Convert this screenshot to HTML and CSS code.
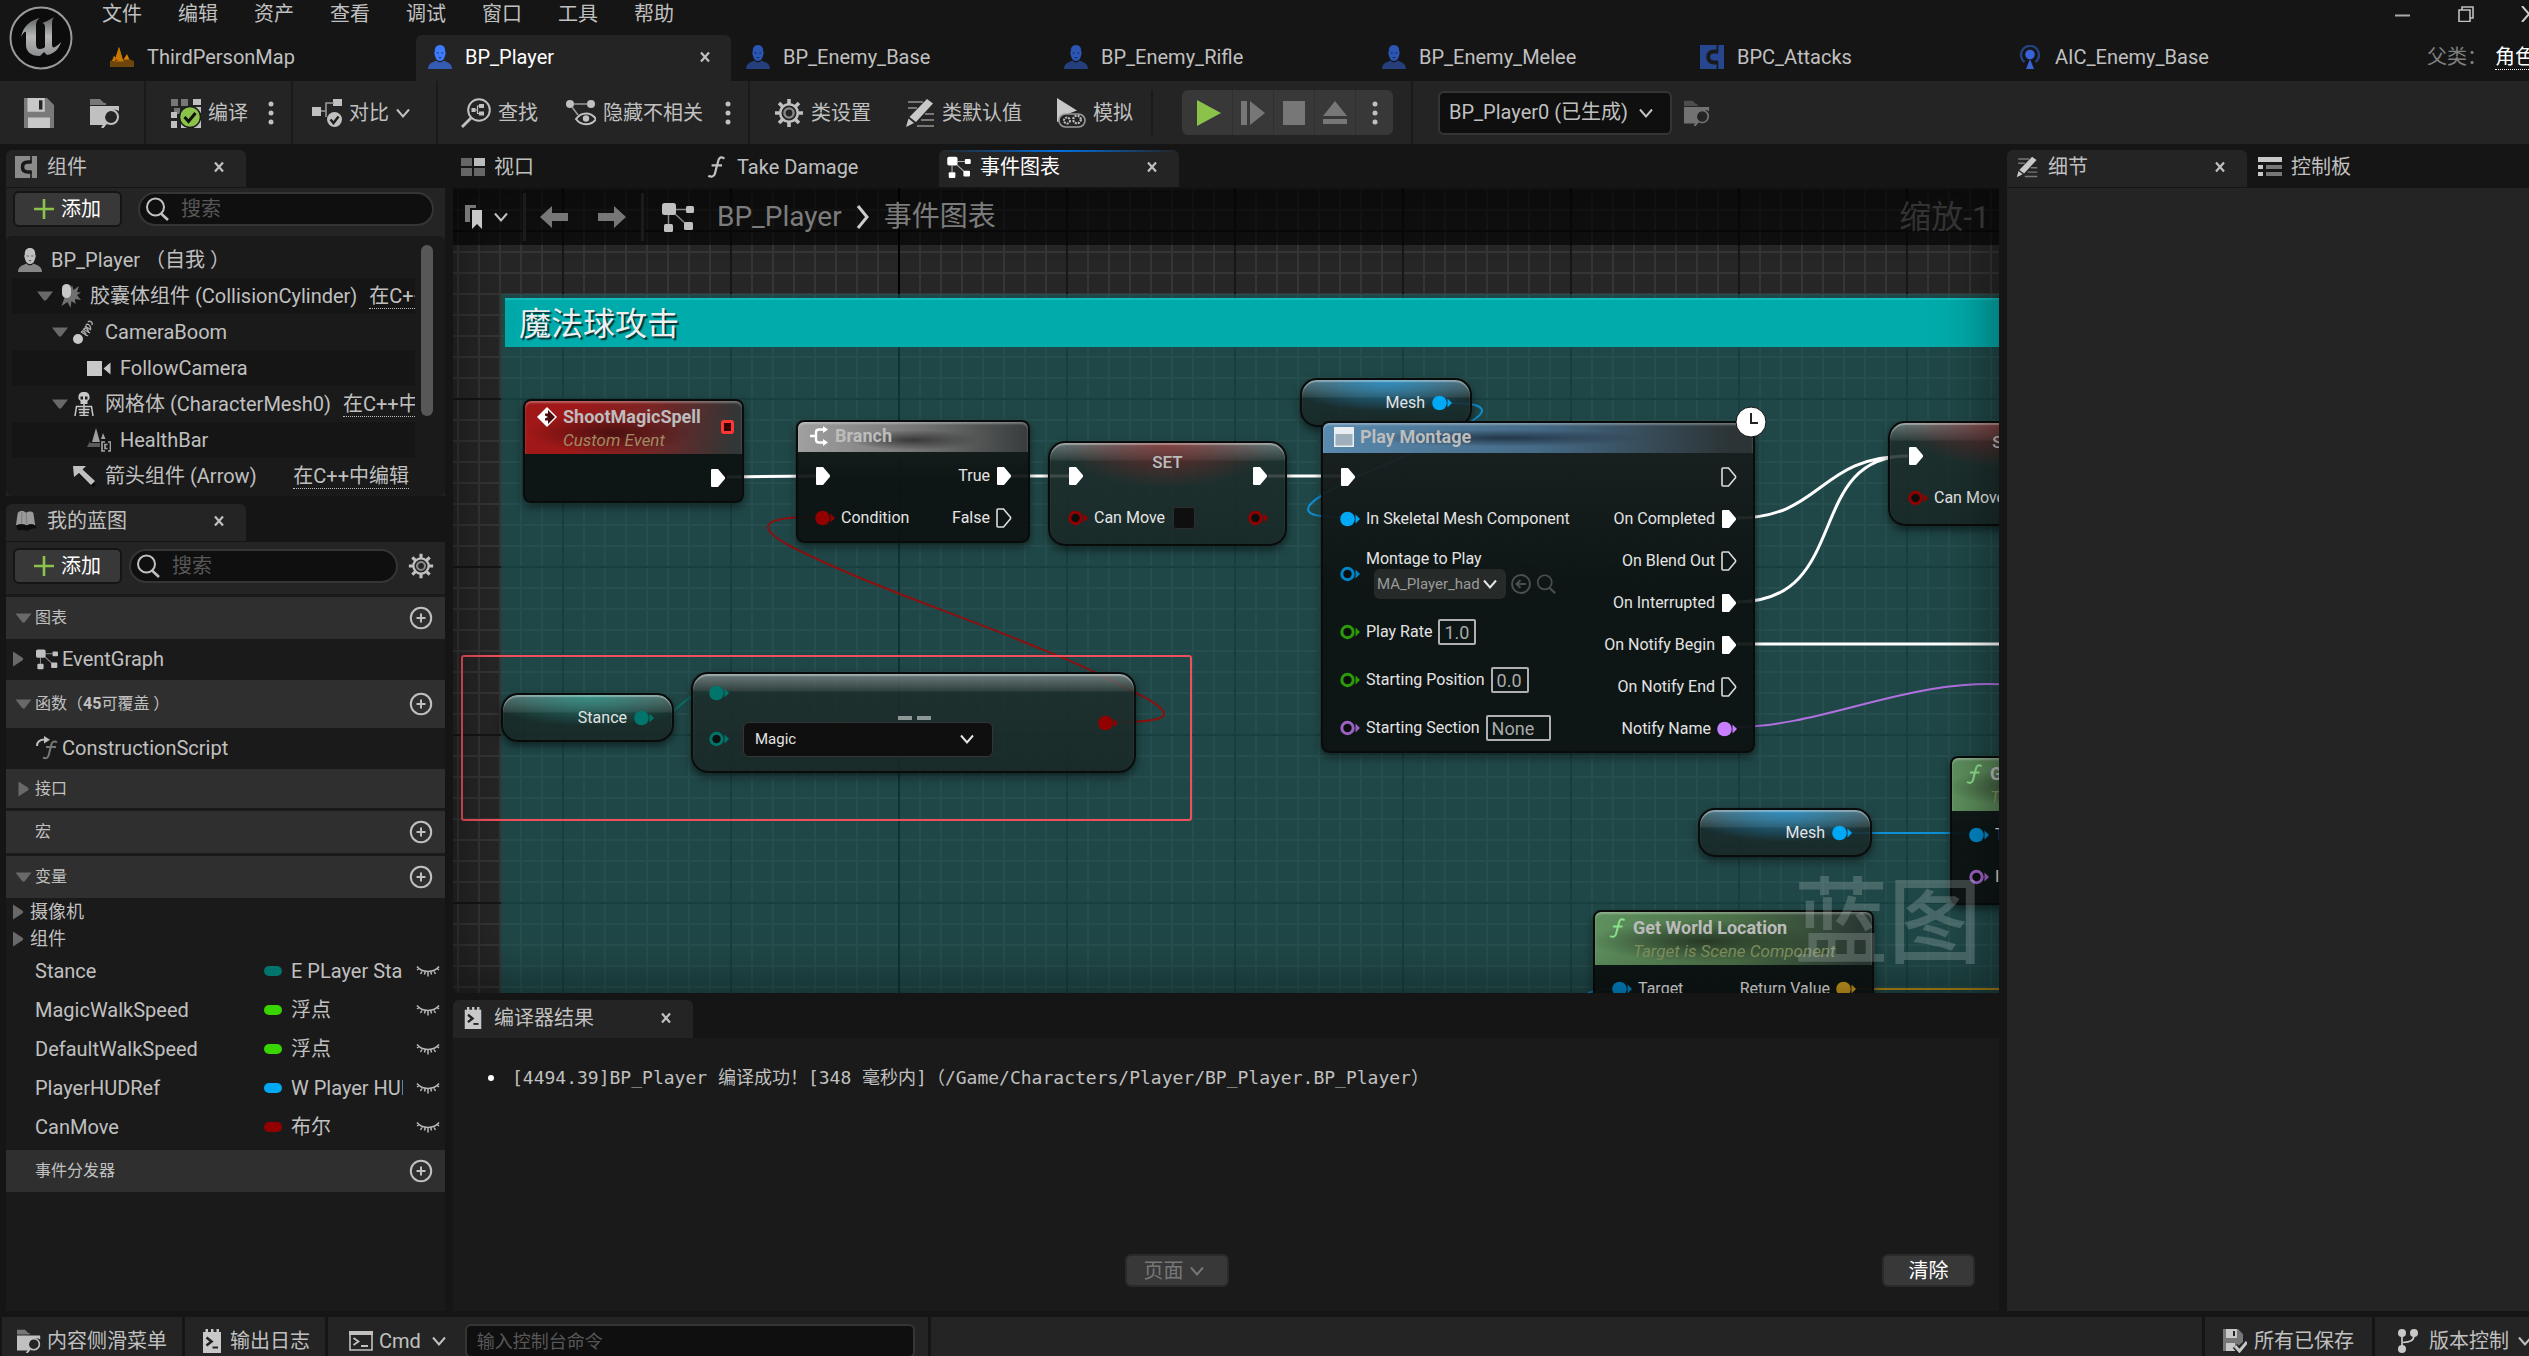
FILE: index.html
```html
<!DOCTYPE html>
<html lang="zh-CN">
<head>
    <meta charset="UTF-8">
    <meta name="viewport" content="width=device-width, initial-scale=1.0">
    <title>BP_Player</title>
    <link rel="stylesheet" href="styles.css">
</head>
<body>
<!-- icon sprite -->
<svg class="sprite" aria-hidden="true">
    <symbol id="i-close" viewBox="0 0 12 12"><path d="M2 1.500l8 9M10 1.500l-8 9" stroke="currentColor" stroke-width="2.200" fill="none"/></symbol>
    <symbol id="i-chevron" viewBox="0 0 14 14"><path d="M1 3.500l6 7 6-7" stroke="currentColor" stroke-width="2" fill="none"/></symbol>
    <symbol id="i-dots" viewBox="0 0 6 24"><circle cx="3" cy="3" r="2.500" fill="currentColor"/><circle cx="3" cy="12" r="2.500" fill="currentColor"/><circle cx="3" cy="21" r="2.500" fill="currentColor"/></symbol>
    <symbol id="i-down" viewBox="0 0 16 12"><path d="M0 1.500h16L9 10.500H7z" fill="#696969"/></symbol>
    <symbol id="i-right" viewBox="0 0 12 16"><path d="M1 0.500v15L11 9V7z" fill="#696969"/></symbol>
    <symbol id="i-plus" viewBox="0 0 20 20"><path d="M10 0v20M0 10h20" stroke="#8bc24a" stroke-width="2.600"/></symbol>
    <symbol id="i-add" viewBox="0 0 24 24"><circle cx="12" cy="12" r="10.200" stroke="currentColor" stroke-width="2" fill="none"/><path d="M12 7.500v9M7.500 12h9" stroke="currentColor" stroke-width="2"/></symbol>
    <symbol id="i-search" viewBox="0 0 24 24"><circle cx="10.500" cy="10" r="8.500" stroke="currentColor" stroke-width="2" fill="none"/><path d="M16 16.500l7 6.500" stroke="currentColor" stroke-width="2.600"/></symbol>
    <symbol id="i-person" viewBox="0 0 24 24"><path d="M12 0c4 0 5.400 3 5.200 6.500l.6 1.500-.9 3.200C16 14.500 14 16 12 16s-4-1.500-4.900-4.800L6.200 8l.6-1.500C6.600 3 8 0 12 0z" fill="currentColor"/><path d="M8.500 8h2.300M13.200 8h2.300M10.800 12.600h2.400" stroke="#000" stroke-opacity=".5" stroke-width="1.200"/><path d="M8.500 15.500c1 1.300 2.200 1.800 3.500 1.800s2.500-.5 3.500-1.800C20 17.500 24 18.500 24 24H0c0-5.500 4-6.500 8.500-8.500z" fill="currentColor" opacity=".65"/></symbol>
    <symbol id="i-level" viewBox="0 0 24 20"><path d="M9 0l4 14H4.500zM17 7l3.500 8H12z" fill="#d98200"/><path d="M0 14l4-1.500h16l4 1.500v6H0z" fill="#6e450c"/><path d="M4 8.500L2 14h6zM9 0l4.500 14.500H4.500z" fill="#c87800"/></symbol>
    <symbol id="i-comp" viewBox="0 0 22 22"><path d="M0 0h22v22H0z" fill="currentColor"/><path d="M16.500 6H13c-3.500 0-5.500 2-5.500 5s2 5 5.500 5h3.500" fill="none" stroke="#191919" stroke-width="3.600"/><path d="M16 0v7M16 15v7" stroke="#191919" stroke-width="1.600"/></symbol>
    <symbol id="i-ai" viewBox="0 0 20 24"><path d="M4.500 17a9 9 0 1 1 11 0" stroke="#24427f" stroke-width="2.400" fill="none"/><circle cx="10" cy="9.500" r="4.800" fill="#3864d8"/><path d="M10 14l4 10H6z" fill="#3864d8"/></symbol>
    <symbol id="i-save" viewBox="0 0 26 26"><path d="M0 0h20l6 6v20H0z" fill="#7a7a7a"/><path d="M3 0h15v12H3zM3.500 17h19v9h-19z" fill="#c8c8c8"/><path d="M13 2h3v8h-3z" fill="#242424"/></symbol>
    <symbol id="i-browse" viewBox="0 0 30 30"><path d="M0 4V1h10l4 4h2v2H0z" fill="#777"/><path d="M0 8h29v5c-5-3-13-1-14 6-.5 3 0 5 1 8H0z" fill="#c0c0c0"/><circle cx="21" cy="19" r="7" fill="none" stroke="#c0c0c0" stroke-width="2"/><path d="M16.500 24.500L12 30" stroke="#c0c0c0" stroke-width="2.400"/></symbol>
    <symbol id="i-compile" viewBox="0 0 30 30"><path d="M0 1h7v7H0zM10 1h7v7h-7zM3 10h6v6H3z" fill="#777"/><path d="M22 1h8v6h-8zM0 14h6v6H0zM0 23h6v7H0zM10 23h6v7h-6zM23 22h7v8h-7zM12 10h5v4h-5zM22 9h8v6h-8z" fill="#c0c0c0"/><circle cx="19" cy="19" r="10.500" fill="#8bc24a" stroke="#1c1c1c" stroke-width="1.500"/><path d="M13.500 19l4 4.500 7-8.500" stroke="#111" stroke-width="3" fill="none"/></symbol>
    <symbol id="i-diff" viewBox="0 0 30 30"><path d="M0 9h9v9H0zM21 1h9v7h-9z" fill="#c0c0c0"/><path d="M9 13h5V5h8M14 13v6" stroke="#999" stroke-width="1.600" fill="none"/><circle cx="22.500" cy="21.500" r="7.500" fill="#c0c0c0"/><path d="M18.500 21.500l3 3.500 5-6.500" stroke="#1c1c1c" stroke-width="2.400" fill="none"/></symbol>
    <symbol id="i-find" viewBox="0 0 30 30"><circle cx="18" cy="12" r="10.800" fill="none" stroke="#c0c0c0" stroke-width="2"/><path d="M10 20L1 29" stroke="#c0c0c0" stroke-width="2.800"/><path d="M10.500 10h4v4h-4zM18 6h5v4h-5zM18 13.500h5v4h-5z" fill="#c0c0c0"/><path d="M14 12h2.500V8H18M16.500 12v3.500H18" stroke="#c0c0c0" stroke-width="1.200" fill="none"/></symbol>
    <symbol id="i-hide" viewBox="0 0 30 30"><circle cx="4" cy="6" r="4" fill="#c0c0c0"/><circle cx="25" cy="6" r="4" fill="#c0c0c0"/><path d="M8 6h13M6 9l6 8" stroke="#999" stroke-width="1.600"/><path d="M10 21c5-7.500 15-7.500 20 0-5 7-15 7-20 0z" fill="none" stroke="#c0c0c0" stroke-width="2"/><circle cx="20" cy="20.500" r="3.200" fill="#c0c0c0"/></symbol>
    <symbol id="i-gear" viewBox="0 0 30 30"><path d="M15 1v5M15 24v5M1 15h5M24 15h5M5 5l3.600 3.600M21.400 21.400L25 25M25 5l-3.600 3.600M8.600 21.400L5 25" stroke="#c0c0c0" stroke-width="3.600"/><circle cx="15" cy="15" r="8.800" fill="none" stroke="#c0c0c0" stroke-width="2.600"/><circle cx="15" cy="15" r="4.600" fill="none" stroke="#888" stroke-width="2.400"/></symbol>
    <symbol id="i-edit" viewBox="0 0 30 30"><path d="M3 4h15M3 10h9M20 16h9M16 22h13M12 28h17" stroke="#777" stroke-width="2"/><path d="M22 1l6 4.500L11 24l-6.500-5z" fill="#c8c8c8"/><path d="M3.500 20.500l5.500 4.500-8 4z" fill="#c8c8c8"/></symbol>
    <symbol id="i-sim" viewBox="0 0 30 30"><path d="M1 0l20 12.500L9 17l-2 5-6 2z" fill="#c8c8c8"/><rect x="3" y="16" width="26" height="13" rx="6.500" fill="#242424" stroke="#999" stroke-width="1.600"/><circle cx="11" cy="22.500" r="3" fill="none" stroke="#c0c0c0" stroke-width="2" stroke-dasharray="2 1"/><circle cx="21" cy="21.500" r="3.800" fill="none" stroke="#c0c0c0" stroke-width="2.200" stroke-dasharray="2 1"/></symbol>
    <symbol id="i-graph" viewBox="0 0 32 30"><rect x="0" y="1" width="14" height="12" rx="2.500" fill="currentColor"/><rect x="24" y="4" width="8" height="7" rx="1.500" fill="currentColor"/><rect x="2" y="22" width="9" height="8" rx="1.500" fill="currentColor"/><rect x="22" y="20" width="9" height="8" rx="1.500" fill="currentColor"/><path d="M14 7.500h10M6.500 13v9M12 11l12 11" stroke="currentColor" stroke-width="1.500" opacity=".65"/></symbol>
    <symbol id="i-view" viewBox="0 0 24 18"><path d="M0 0h11v8H0zM0 10h11v8H0zM13 10h11v8H13z" fill="#666"/><path d="M13 0h11v8H13z" fill="#bbb"/></symbol>
    <symbol id="i-fn" viewBox="0 0 16 20"><path d="M15.500 2.500C14 .5 11 .5 10 4.500L7 16c-.8 3-3.500 3.500-6 2M4 8.500h9.500" stroke="currentColor" stroke-width="2" fill="none"/></symbol>
    <symbol id="i-script" viewBox="0 0 22 24"><path d="M1 10C1 5 5 3.500 9 3.500" stroke="#c0c0c0" stroke-width="2" fill="none"/><path d="M8 0l6 3.700L8 7.500z" fill="#c0c0c0"/><path d="M21 6.500c-2.500-2-5-1-5.800 2.500L13 18c-.8 4-3 5-6 3.500M10 11h10" stroke="#777" stroke-width="2" fill="none"/></symbol>
    <symbol id="i-log" viewBox="0 0 20 24"><path d="M1 3h2.500V0H6v3h3V0h2.500v3h3V0H17v3h2v21H1z" fill="#c8c8c8"/><path d="M4.500 8.500l5 4-5 4" stroke="#222" stroke-width="2.600" fill="none"/><path d="M10.500 18.500H16" stroke="#222" stroke-width="2"/></symbol>
    <symbol id="i-cmd" viewBox="0 0 24 20"><path d="M1 1h22v18H1z" fill="none" stroke="#c0c0c0" stroke-width="1.600"/><path d="M0 0h24v4H0z" fill="#c0c0c0"/><path d="M4.500 7l5 3.500-5 3.500M12 15h7" stroke="#c0c0c0" stroke-width="1.800" fill="none"/></symbol>
    <symbol id="i-book" viewBox="0 0 24 24"><path d="M3 3c3-3 6-3 9 0 3-2 6-2 8 0l2 14c-3-2-6-2-9 0-4-2-8-2-12 0z" fill="#9a9a9a"/><path d="M1 17c4-2 8-2 12 0 3-2 6-2 9 0l2 3c-4 0-7 0-10 3-4-2-9-1-11-1z" fill="#0d0d0d"/><path d="M12 3l1 13M7.500 2L7 15" stroke="#777"/></symbol>
    <symbol id="i-palette" viewBox="0 0 24 20"><path d="M0 0h24v5H0zM0 8h5v4H0zM0 15h5v4H0z" fill="#c8c8c8"/><path d="M8 8h16v4H8zM8 15h16v4H8z" fill="#777"/></symbol>
    <symbol id="i-capsule" viewBox="0 0 24 24"><path d="M10 9l3-3 2-5 1.500 5L22 2l-2 6 4 .5-4 2.500 4 5-6-1 .5 5-4-3-1 7-3-6-6 4 2.500-7z" fill="#707070"/><rect x="5" y="0" width="9" height="14" rx="4.500" fill="#c8c8c8"/></symbol>
    <symbol id="i-spring" viewBox="0 0 24 24"><circle cx="6" cy="19" r="5" fill="#c8c8c8"/><path d="M9 12l7 4M11 9l7 4M13 6l6 4M9.500 12c1-3 5 1 4.500 4M12 9c1-3 5 1 4.500 4M14 5.500c1-3 5 0 4.500 3.500M16 2c1.500-2 5 0 4 3" stroke="#aaa" stroke-width="1.400" fill="none"/></symbol>
    <symbol id="i-camera" viewBox="0 0 24 16"><path d="M0 1h15v15H0zM23.500 2.500v12L16.500 8.500z" fill="#c8c8c8"/></symbol>
    <symbol id="i-skel" viewBox="0 0 20 24"><path fill-rule="evenodd" d="M10 0c4 0 5.500 2 5.500 5v2l-2 2v3h-7V9l-2-2V5C4.500 2 6 0 10 0zM6.500 4.500v3h2.500v-3zM11 4.500v3h2.500v-3z" fill="#c8c8c8"/><path d="M10 12v12M1 24l1.500-9.500h15L19 24M4.500 17.500h11M5 20.500h10M5.500 23.500h9" stroke="#c8c8c8" stroke-width="1.500" fill="none"/></symbol>
    <symbol id="i-widget" viewBox="0 0 24 24"><path d="M9 0l4 14H5zM16 5l2.500 6H14z" fill="#a0a0a0"/><path d="M3 13l-3 6h13v-4H3z" fill="#5b5b5b"/><path d="M18 14h-3v9h3M21 14h2.500v9H21M20.500 16.500H18v4h2.500" stroke="#a0a0a0" stroke-width="1.700" fill="none"/></symbol>
    <symbol id="i-arrow3d" viewBox="0 0 24 24"><path d="M4 8l4-2 16 15-3 2z" fill="#080808"/><path d="M1 2l13 0-3.500 3.500L23 17l-4 4L7 9l-5 4z" fill="#c0c0c0"/></symbol>
    <symbol id="i-eye" viewBox="0 0 24 14"><path d="M1 2.500c5 6.500 17 6.500 22 0M12 7.500v5M6.500 6.500L4.500 10M17.500 6.500L19.500 10M9.300 7.200L8.500 10.500M14.700 7.200l.8 3.300M3 4.500L1 6M21 4.500L23 6" stroke="#b8b8b8" stroke-width="1.500" fill="none"/></symbol>
    <symbol id="i-saved" viewBox="0 0 24 24"><path d="M0 0h15l5 5v8l-7 6 2 3H0z" fill="#777"/><path d="M3 0h11v9H3zM3 14h9v8H3z" fill="#c8c8c8"/><path d="M10 2h2v5h-2z" fill="#222"/><path d="M12 17l4.500 5L24 13" stroke="#242424" stroke-width="6" fill="none"/><path d="M12 17l4.500 5L24 13" stroke="#c8c8c8" stroke-width="3" fill="none"/></symbol>
    <symbol id="i-branch" viewBox="0 0 20 24"><circle cx="4" cy="4" r="4" fill="#c8c8c8"/><circle cx="16" cy="4" r="4" fill="#c8c8c8"/><circle cx="4" cy="20" r="4" fill="#c8c8c8"/><path d="M4 6v12M16 6c0 6-4 7-11 7.500" stroke="#c8c8c8" stroke-width="1.700" fill="none"/></symbol>
    <symbol id="i-mark" viewBox="0 0 18 24"><path d="M0 0h11v3H5v14H0z" fill="#777"/><path d="M7 5h10v19l-5-5-5 5z" fill="#c8c8c8"/></symbol>
    <symbol id="i-back" viewBox="0 0 28 22"><path d="M0 11L12 0v7h16v8H12v7z" fill="#777"/></symbol>
    <symbol id="i-fwd" viewBox="0 0 28 22"><path d="M28 11L16 0v7H0v8h16v7z" fill="#777"/></symbol>
    <!-- pins -->
    <symbol id="p-exec" viewBox="0 0 16 20"><path d="M1 2q0-1 1-1h6l7 8.200v1.600L8 19H2q-1 0-1-1z" fill="#fff"/></symbol>
    <symbol id="p-exec-o" viewBox="0 0 16 20"><path d="M1 2q0-1 1-1h5.500l7 8.200v1.600l-7 8.200H2q-1 0-1-1z" fill="none" stroke="#ddd" stroke-width="1.600"/></symbol>
    <symbol id="p-data" viewBox="0 0 20 16"><circle cx="7.500" cy="8" r="7.300" fill="currentColor"/><path d="M15.500 3.500L20 8l-4.500 4.500z" fill="currentColor"/></symbol>
    <symbol id="p-data-o" viewBox="0 0 20 16"><circle cx="7.500" cy="8" r="5.700" fill="#0a0f0e" stroke="currentColor" stroke-width="3"/><path d="M15.500 3.500L20 8l-4.500 4.500z" fill="currentColor"/></symbol>
</svg>

<header class="topbar">
    <svg class="logo" viewBox="0 0 64 64">
        <defs><linearGradient id="lg" x2="0" y2="1"><stop offset="0" stop-color="#5d6061"/><stop offset=".5" stop-color="#b5b7b8"/><stop offset="1" stop-color="#8c8e8f"/></linearGradient></defs>
        <circle cx="32" cy="32" r="30.500" fill="#0c0c0c" stroke="#9a9a9a" stroke-width="2"/>
        <path d="M12 31C14 21 21 14 31 12c-3 2-4 4-4 7v18c0 4 1 6 4 6 2 0 4-1 5-2V21c0-2-1-4-3-4 4-1 7-3 12-6-2 3-2 5-2 8v19c0 3 1 4 3 3 2-1 4-3 6-5-2 7-7 12-14 13l-3-3-4 4C21 50 17 45 17 39V27c0-2-2-2-5 4z" fill="url(#lg)"/>
    </svg>
    <div class="topbar-main">
        <nav class="menu">
            <button>文件</button><button>编辑</button><button>资产</button><button>查看</button><button>调试</button><button>窗口</button><button>工具</button><button>帮助</button>
            <div class="win-controls">
                <button aria-label="最小化"><svg width="16" height="16" viewBox="0 0 16 16"><path d="M0 9.500h15" stroke="#aaa" stroke-width="2"/></svg></button>
                <button aria-label="还原"><svg width="16" height="16" viewBox="0 0 16 16"><path d="M1 4h11v11.500H1zM4 4V1h11v11h-3" stroke="#c0c0c0" stroke-width="1.600" fill="none"/></svg></button>
                <button aria-label="关闭"><svg width="16" height="16" viewBox="0 0 16 16"><path d="M1 0l14 16M15 0L1 16" stroke="#ccc" stroke-width="2"/></svg></button>
            </div>
        </nav>
        <div class="asset-tabs">
            <a class="asset-tab" href="#"><svg class="ic"><use href="#i-level"/></svg>ThirdPersonMap</a>
            <div class="asset-tab active">
                <svg class="ic blue"><use href="#i-person"/></svg><span>BP_Player</span>
                <button class="close" aria-label="关闭"><svg><use href="#i-close"/></svg></button>
            </div>
            <a class="asset-tab" href="#"><svg class="ic navy"><use href="#i-person"/></svg>BP_Enemy_Base</a>
            <a class="asset-tab" href="#"><svg class="ic navy"><use href="#i-person"/></svg>BP_Enemy_Rifle</a>
            <a class="asset-tab" href="#"><svg class="ic navy"><use href="#i-person"/></svg>BP_Enemy_Melee</a>
            <a class="asset-tab" href="#"><svg class="ic comp"><use href="#i-comp"/></svg>BPC_Attacks</a>
            <a class="asset-tab" href="#"><svg class="ic"><use href="#i-ai"/></svg>AIC_Enemy_Base</a>
            <div class="parent-class">父类： <a href="#">角色</a></div>
        </div>
    </div>
</header>

<div class="toolbar">
    <div class="group g-file">
        <button aria-label="保存"><svg class="ti"><use href="#i-save"/></svg></button>
        <button aria-label="浏览"><svg class="ti"><use href="#i-browse"/></svg></button>
    </div>
    <div class="group g-compile">
        <button><svg class="ti"><use href="#i-compile"/></svg>编译</button>
        <button aria-label="编译选项"><svg class="dots"><use href="#i-dots"/></svg></button>
    </div>
    <div class="group g-diff">
        <button><svg class="ti"><use href="#i-diff"/></svg>对比<svg class="chev"><use href="#i-chevron"/></svg></button>
    </div>
    <div class="group g-find">
        <button><svg class="ti"><use href="#i-find"/></svg>查找</button>
        <button><svg class="ti"><use href="#i-hide"/></svg>隐藏不相关</button>
        <button aria-label="隐藏选项"><svg class="dots"><use href="#i-dots"/></svg></button>
    </div>
    <div class="group g-class">
        <button><svg class="ti"><use href="#i-gear"/></svg>类设置</button>
        <button><svg class="ti"><use href="#i-edit"/></svg>类默认值</button>
        <button><svg class="ti"><use href="#i-sim"/></svg>模拟</button>
    </div>
    <div class="group g-play">
        <div class="play">
            <button aria-label="播放"><svg width="24" height="26"><path d="M0 0l24 13L0 26z" fill="#8bc24a"/></svg></button>
            <button aria-label="步进"><svg width="24" height="24"><path d="M0 0h6v24H0zM9 0l15 12L9 24z" fill="#777"/></svg></button>
            <button aria-label="停止"><svg width="22" height="24"><path d="M0 0h22v24H0z" fill="#777"/></svg></button>
            <button aria-label="弹出"><svg width="24" height="24"><path d="M12 0l12 15H0zM0 18h24v5H0z" fill="#777"/></svg></button>
            <button aria-label="更多"><svg class="dots"><use href="#i-dots"/></svg></button>
        </div>
    </div>
    <div class="group g-debug">
        <div class="select debug-select">
            <select aria-label="调试对象"><option>BP_Player0 (已生成)</option></select>
            <svg class="chev"><use href="#i-chevron"/></svg>
        </div>
        <button class="dim" aria-label="定位"><svg class="ti small"><use href="#i-browse"/></svg></button>
    </div>
</div>

<main class="workspace">
    <aside class="left">
        <div class="dock-tabs">
            <div class="dock-tab active"><svg class="ic grey"><use href="#i-comp"/></svg><span>组件</span><button class="close" aria-label="关闭"><svg><use href="#i-close"/></svg></button></div>
        </div>
        <section class="components">
            <div class="panel-bar">
                <button class="btn add"><svg><use href="#i-plus"/></svg>添加</button>
                <label class="search"><svg><use href="#i-search"/></svg><input type="text" placeholder="搜索" aria-label="搜索组件"></label>
            </div>
            <div class="tree-wrap">
                <ul class="tree">
                    <li class="root"><svg class="ic"><use href="#i-person"/></svg><span>BP_Player （自我 ）</span></li>
                    <li class="d1"><svg class="tri"><use href="#i-down"/></svg><svg class="ic"><use href="#i-capsule"/></svg><span>胶囊体组件 (CollisionCylinder)</span><a href="#">在C++中编辑</a></li>
                    <li class="d2"><svg class="tri"><use href="#i-down"/></svg><svg class="ic"><use href="#i-spring"/></svg><span>CameraBoom</span></li>
                    <li class="d3"><svg class="ic"><use href="#i-camera"/></svg><span>FollowCamera</span></li>
                    <li class="d2"><svg class="tri"><use href="#i-down"/></svg><svg class="ic"><use href="#i-skel"/></svg><span>网格体 (CharacterMesh0)</span><a href="#">在C++中编辑</a></li>
                    <li class="d3"><svg class="ic"><use href="#i-widget"/></svg><span>HealthBar</span></li>
                    <li class="d2 leaf"><svg class="ic"><use href="#i-arrow3d"/></svg><span>箭头组件 (Arrow)</span><a class="end" href="#">在C++中编辑</a></li>
                </ul>
                <div class="scroll-thumb"></div>
            </div>
        </section>

        <div class="dock-tabs lower">
            <div class="dock-tab active"><svg class="ic"><use href="#i-book"/></svg><span>我的蓝图</span><button class="close" aria-label="关闭"><svg><use href="#i-close"/></svg></button></div>
        </div>
        <section class="my-blueprint">
            <div class="panel-bar">
                <button class="btn add"><svg><use href="#i-plus"/></svg>添加</button>
                <label class="search"><svg><use href="#i-search"/></svg><input type="text" placeholder="搜索" aria-label="搜索蓝图"></label>
                <button class="gear" aria-label="设置"><svg><use href="#i-gear"/></svg></button>
            </div>
            <div class="sections">
                <h3 class="sec"><svg class="tri"><use href="#i-down"/></svg><span>图表</span><button aria-label="添加图表"><svg><use href="#i-add"/></svg></button></h3>
                <div class="item"><svg class="tri-r"><use href="#i-right"/></svg><svg class="ic"><use href="#i-graph"/></svg>EventGraph</div>
                <h3 class="sec tall"><svg class="tri"><use href="#i-down"/></svg><span>函数（<b>45</b>可覆盖 ）</span><button aria-label="添加函数"><svg><use href="#i-add"/></svg></button></h3>
                <div class="item"><i class="tri-r"></i><svg class="ic"><use href="#i-script"/></svg>ConstructionScript</div>
                <h3 class="sec short"><svg class="tri"><use href="#i-right"/></svg><span>接口</span></h3>
                <h3 class="sec gap"><i class="tri"></i><span>宏</span><button aria-label="添加宏"><svg><use href="#i-add"/></svg></button></h3>
                <h3 class="sec gap"><svg class="tri"><use href="#i-down"/></svg><span>变量</span><button aria-label="添加变量"><svg><use href="#i-add"/></svg></button></h3>
                <div class="cat"><svg class="tri-r"><use href="#i-right"/></svg>摄像机</div>
                <div class="cat"><svg class="tri-r"><use href="#i-right"/></svg>组件</div>
                <ul class="vars">
                    <li><span class="name">Stance</span><i class="pill enum"></i><span class="type">E PLayer Stance</span><svg class="eye"><use href="#i-eye"/></svg></li>
                    <li><span class="name">MagicWalkSpeed</span><i class="pill float"></i><span class="type">浮点</span><svg class="eye"><use href="#i-eye"/></svg></li>
                    <li><span class="name">DefaultWalkSpeed</span><i class="pill float"></i><span class="type">浮点</span><svg class="eye"><use href="#i-eye"/></svg></li>
                    <li><span class="name">PlayerHUDRef</span><i class="pill object"></i><span class="type">W Player HUD</span><svg class="eye"><use href="#i-eye"/></svg></li>
                    <li><span class="name">CanMove</span><i class="pill bool"></i><span class="type">布尔</span><svg class="eye"><use href="#i-eye"/></svg></li>
                </ul>
                <h3 class="sec gap"><i class="tri"></i><span>事件分发器</span><button aria-label="添加事件分发器"><svg><use href="#i-add"/></svg></button></h3>
            </div>
        </section>
    </aside>

    <div class="center">
        <div class="dock-tabs">
            <a class="dock-tab" href="#"><svg class="ic"><use href="#i-view"/></svg><span>视口</span></a>
            <a class="dock-tab fn-tab" href="#"><svg class="ic"><use href="#i-fn"/></svg><span>Take Damage</span></a>
            <div class="dock-tab active focus"><svg class="ic"><use href="#i-graph"/></svg><span>事件图表</span><button class="close" aria-label="关闭"><svg><use href="#i-close"/></svg></button></div>
        </div>
        <div class="graph">
            <div class="comment"><h2>魔法球攻击</h2></div>
            <!-- wires run behind the nodes, so they dim where a node covers them -->
            <svg class="wires">
                <g fill="none" stroke-width="2">
                    <path d="M274 289L363 288M558 288H617M815 288H890" stroke="#fff" stroke-width="3"/>
                    <path d="M363 329C330 329 315 332 315 339C315 348 340 360 366 372C430 402 500 425 566 452C600 466 625 475 647 487C690 508 711 518 711 526C711 532 690 534 668 534" stroke="#8b1010"/>
                    <path d="M200 530C228 530 225 505 256 505" stroke="#0a6e63"/>
                    <path d="M998 215C1018 215 1029 217 1029 223C1029 230 1000 244 962 263C930 279 920 281 901 290C880 300 855 314 855 321C855 328 870 329 890 329" stroke="#0f8fd4"/>
                    <path d="M1284 330C1370 330 1365 268 1455 268M1284 414C1400 414 1350 268 1455 268M1284 456H1560" stroke="#fff" stroke-width="3"/>
                    <path d="M1283 539C1370 539 1460 488 1560 497" stroke="#b070e0"/>
                    <path d="M1398 645H1516" stroke="#0f8fd4"/>
                    <path d="M1402 801H1560" stroke="#b58a14"/>
                    <path d="M1135 805q12-4 25-4" stroke="#0f8fd4"/>
                </g>
            </svg>

            <div class="node n-shoot">
                <header class="tall red">
                    <svg class="hi" viewBox="0 0 20 20"><path d="M10 0l10 10-10 10L0 10z" fill="#fff"/><path d="M11 3l7 7-7 7v-3.500H8v-2l3-1.500-3-1.500v-2h3z" fill="#4a0b0b"/></svg>
                    <div><strong>ShootMagicSpell</strong><em>Custom Event</em></div>
                    <i class="delegate"></i>
                </header>
                <div class="pins"><div class="in"></div><div class="out"><div class="row"><svg class="exec"><use href="#p-exec"/></svg></div></div></div>
            </div>

            <div class="node n-branch">
                <header class="grey">
                    <svg class="hi" viewBox="0 0 20 20"><path d="M1 10h5M15 3.500H10q-3 0-3 3v7q0 3 3 3h5" stroke="#fff" stroke-width="2.400" fill="none"/><path d="M14 0l5 3.500L14 7zM14 13l5 3.500-5 3.500z" fill="#fff"/></svg>
                    <strong>Branch</strong>
                </header>
                <div class="pins">
                    <div class="in">
                        <div class="row"><svg class="exec"><use href="#p-exec"/></svg></div>
                        <div class="row"><svg class="data bool"><use href="#p-data"/></svg>Condition</div>
                    </div>
                    <div class="out">
                        <div class="row">True<svg class="exec"><use href="#p-exec"/></svg></div>
                        <div class="row">False<svg class="exec"><use href="#p-exec-o"/></svg></div>
                    </div>
                </div>
            </div>

            <div class="node round n-set">
                <strong class="mid">SET</strong>
                <div class="pins">
                    <div class="in">
                        <div class="row"><svg class="exec"><use href="#p-exec"/></svg></div>
                        <label class="row"><svg class="data bool"><use href="#p-data-o"/></svg>Can Move<input type="checkbox"></label>
                    </div>
                    <div class="out">
                        <div class="row"><svg class="exec"><use href="#p-exec"/></svg></div>
                        <div class="row"><svg class="data bool"><use href="#p-data-o"/></svg></div>
                    </div>
                </div>
            </div>

            <div class="node round var blue-glow n-mesh">Mesh<svg class="data object"><use href="#p-data"/></svg></div>

            <div class="node n-montage">
                <header class="steel">
                    <svg class="hi" viewBox="0 0 20 20"><path d="M0 0h20v20H0z" fill="#e8eef2"/><path d="M1.500 7h17v11.500h-17z" fill="#9fb0bc"/></svg>
                    <strong>Play Montage</strong>
                </header>
                <svg class="clock" viewBox="0 0 32 32"><circle cx="16" cy="16" r="15" fill="#fff" stroke="#111"/><path d="M16 7v10h7" stroke="#222" stroke-width="2" fill="none"/></svg>
                <div class="pins">
                    <div class="in">
                        <div class="row"><svg class="exec"><use href="#p-exec"/></svg></div>
                        <div class="row"><svg class="data object"><use href="#p-data"/></svg>In Skeletal Mesh Component</div>
                        <div class="row asset">
                            <svg class="data object-d"><use href="#p-data-o"/></svg>
                            <div>
                                <label for="montage">Montage to Play</label>
                                <div class="asset-pick">
                                    <div class="select"><select id="montage"><option>MA_Player_hadouken</option></select><svg class="chev"><use href="#i-chevron"/></svg></div>
                                    <button aria-label="使用选中资产"><svg viewBox="0 0 20 20"><circle cx="10" cy="10" r="9" fill="none" stroke="#4a4f4e" stroke-width="2"/><path d="M15 10H6M9.500 6L5.500 10l4 4" fill="none" stroke="#4a4f4e" stroke-width="2"/></svg></button>
                                    <button aria-label="浏览到资产"><svg><use href="#i-search"/></svg></button>
                                </div>
                            </div>
                        </div>
                        <label class="row val"><svg class="data float"><use href="#p-data-o"/></svg>Play Rate<input type="text" class="num" value="1.0"></label>
                        <label class="row val"><svg class="data float"><use href="#p-data-o"/></svg>Starting Position<input type="text" class="num" value="0.0"></label>
                        <label class="row val"><svg class="data name-d"><use href="#p-data-o"/></svg>Starting Section<input type="text" class="word" value="None"></label>
                    </div>
                    <div class="out">
                        <div class="row"><svg class="exec"><use href="#p-exec-o"/></svg></div>
                        <div class="row">On Completed<svg class="exec"><use href="#p-exec"/></svg></div>
                        <div class="row">On Blend Out<svg class="exec"><use href="#p-exec-o"/></svg></div>
                        <div class="row">On Interrupted<svg class="exec"><use href="#p-exec"/></svg></div>
                        <div class="row">On Notify Begin<svg class="exec"><use href="#p-exec"/></svg></div>
                        <div class="row">On Notify End<svg class="exec"><use href="#p-exec-o"/></svg></div>
                        <div class="row">Notify Name<svg class="data name"><use href="#p-data"/></svg></div>
                    </div>
                </div>
            </div>

            <div class="node round n-set n-set2">
                <strong class="mid">SET</strong>
                <div class="pins">
                    <div class="in">
                        <div class="row"><svg class="exec"><use href="#p-exec"/></svg></div>
                        <div class="row"><svg class="data bool"><use href="#p-data-o"/></svg>Can Move</div>
                    </div>
                </div>
            </div>

            <div class="node round var teal-glow n-stance">Stance<svg class="data enum"><use href="#p-data"/></svg></div>

            <div class="node round n-equal">
                <div class="in">
                    <div class="row row-a"><svg class="data enum"><use href="#p-data"/></svg></div>
                    <div class="row row-b">
                        <svg class="data enum"><use href="#p-data-o"/></svg>
                        <div class="select"><select aria-label="Stance"><option>Magic</option></select><svg class="chev"><use href="#i-chevron"/></svg></div>
                    </div>
                </div>
                <svg class="data bool"><use href="#p-data"/></svg>
                <div class="eq"><i></i><i></i></div>
            </div>
            <div class="marquee"></div>

            <div class="node round var blue-glow n-mesh2">Mesh<svg class="data object"><use href="#p-data"/></svg></div>

            <div class="node n-socket">
                <header class="tall green"><svg class="hi fn"><use href="#i-fn"/></svg><div><strong>Get Socket Location</strong><em>Target is Scene Component</em></div></header>
                <div class="pins"><div class="in">
                    <div class="row"><svg class="data object-d"><use href="#p-data"/></svg>Target</div>
                    <div class="row"><svg class="data name-d"><use href="#p-data-o"/></svg>In Socket Name</div>
                </div></div>
            </div>

            <div class="node n-world">
                <header class="tall green"><svg class="hi fn"><use href="#i-fn"/></svg><div><strong>Get World Location</strong><em>Target is Scene Component</em></div></header>
                <div class="pins">
                    <div class="in"><div class="row"><svg class="data object-d"><use href="#p-data"/></svg>Target</div></div>
                    <div class="out"><div class="row">Return Value<svg class="data vector"><use href="#p-data"/></svg></div></div>
                </div>
            </div>

            <div class="graph-bar">
                <button aria-label="书签"><svg width="18" height="24"><use href="#i-mark"/></svg><svg class="chev"><use href="#i-chevron"/></svg></button>
                <i class="bar-sep"></i>
                <button class="nav-btn" aria-label="后退"><svg><use href="#i-back"/></svg></button>
                <button class="nav-btn" aria-label="前进"><svg><use href="#i-fwd"/></svg></button>
                <i class="bar-sep"></i>
                <svg class="crumb-ic"><use href="#i-graph"/></svg>
                <span>BP_Player</span>
                <svg class="crumb-sep" viewBox="0 0 14 24"><path d="M2 1l9 11-9 11" stroke="#ccc" stroke-width="3" fill="none"/></svg>
                <span>事件图表</span>
                <span class="zoom">缩放-1</span>
            </div>
            <div class="watermark">蓝图</div>
        </div>

        <div class="dock-tabs results-tabs">
            <div class="dock-tab active"><svg class="ic"><use href="#i-log"/></svg><span>编译器结果</span><button class="close" aria-label="关闭"><svg><use href="#i-close"/></svg></button></div>
        </div>
        <section class="results">
            <ul><li>[4494.39]BP_Player 编译成功！[348 毫秒内]（/Game/Characters/Player/BP_Player.BP_Player）</li></ul>
            <div class="results-foot">
                <div class="pages"><button class="btn" disabled>页面<svg class="chev"><use href="#i-chevron"/></svg></button></div>
                <button class="btn clear">清除</button>
            </div>
        </section>
    </div>

    <aside class="right">
        <div class="dock-tabs">
            <div class="dock-tab active"><svg class="ic"><use href="#i-edit"/></svg><span>细节</span><button class="close" aria-label="关闭"><svg><use href="#i-close"/></svg></button></div>
            <a class="dock-tab" href="#"><svg class="ic"><use href="#i-palette"/></svg><span>控制板</span></a>
        </div>
        <section class="details"></section>
    </aside>
</main>

<footer class="status">
    <button class="s-item"><svg class="ic"><use href="#i-browse"/></svg>内容侧滑菜单</button>
    <button class="s-item"><svg class="ic"><use href="#i-log"/></svg>输出日志</button>
    <div class="s-item s-cmd">
        <svg class="ic"><use href="#i-cmd"/></svg>
        <button>Cmd<svg class="chev"><use href="#i-chevron"/></svg></button>
        <input type="text" placeholder="输入控制台命令" aria-label="控制台命令">
    </div>
    <div class="s-fill"></div>
    <button class="s-item s-saved"><svg class="ic"><use href="#i-saved"/></svg>所有已保存</button>
    <button class="s-item s-vcs"><svg class="ic"><use href="#i-branch"/></svg>版本控制<svg class="chev"><use href="#i-chevron"/></svg></button>
</footer>
</body>
</html>
```

FILE: styles.css
```css
* {
    box-sizing: border-box;
}
body {
    margin: 0;
    height: 100vh;
    display: flex;
    flex-direction: column;
    overflow: hidden;
    background: #151515;
    color: #c0c0c0;
    font: 20px/24px Roboto, "Noto Sans CJK SC", sans-serif;
}
button, input, select {
    font: inherit;
    color: inherit;
    background: none;
    border: 0;
    padding: 0;
    margin: 0;
}
button {
    display: flex;
    align-items: center;
    white-space: nowrap;
}
a {
    color: inherit;
    text-decoration: none;
}
svg {
    flex: none;
    display: block;
}
ul {
    list-style: none;
    margin: 0;
    padding: 0;
}
.sprite {
    position: absolute;
    width: 0;
    height: 0;
}
.ic {
    width: 24px;
    height: 24px;
}
.chev {
    width: 14px;
    height: 14px;
}
.dots {
    width: 6px;
    height: 24px;
}
.close svg {
    width: 12px;
    height: 12px;
}

/* top bar */
.topbar {
    display: flex;
    height: 81px;
    flex: none;
}
.logo {
    width: 64px;
    height: 64px;
    margin: 6px 11px 0 9px;
}
.topbar-main {
    flex: 1;
    min-width: 0;
    display: flex;
    flex-direction: column;
    justify-content: space-between;
}
.menu {
    display: flex;
    height: 28px;
}
.menu > button {
    padding: 0 18px;
}
.win-controls {
    margin-left: auto;
    display: flex;
    gap: 47px;
    margin-right: -8px;
}
.asset-tabs {
    display: flex;
    height: 46px;
    padding-left: 14px;
    gap: 3px;
}
.asset-tab {
    width: 315px;
    flex: none;
    display: flex;
    align-items: center;
    gap: 13px;
    padding: 0 20px 2px 12px;
    border-radius: 6px 6px 0 0;
}
.asset-tab.active {
    background: #242424;
    color: #fff;
}
.asset-tab .close, .dock-tab .close {
    margin-left: auto;
    color: #c0c0c0;
}
.blue {
    color: #3d7bff;
}
.navy {
    color: #2c56b4;
}
.comp {
    color: #26478f;
}
.parent-class {
    margin-left: auto;
    flex: none;
    display: flex;
    align-items: center;
    gap: 8px;
    color: #808080;
    margin-right: -6px;
    padding-bottom: 2px;
}
.parent-class a {
    color: #fff;
    border-bottom: 1px dotted #fff;
}

/* toolbar */
.toolbar {
    flex: none;
    height: 63px;
    background: #242424;
    display: flex;
}
.group {
    display: flex;
    align-items: center;
    border-right: 2px solid #1a1a1a;
}
.group button {
    gap: 7px;
}
.ti {
    width: 30px;
    height: 30px;
}
.g-file {
    padding: 0 24px;
    gap: 36px;
}
.g-compile {
    padding: 0 17px 0 25px;
    gap: 20px;
}
.g-diff {
    padding: 0 26px 0 19px;
}
.g-find {
    padding: 0 17px 0 23px;
    gap: 25px;
}
.g-find button:nth-child(2) {
    margin-left: 3px;
}
.g-find button:last-child {
    margin-left: -3px;
}
.g-class {
    padding: 0 18px 0 24px;
    gap: 34px;
    height: 45px;
    align-self: center;
}
.g-play {
    padding: 0 18px 0 29px;
}
.g-debug {
    padding: 0 25px;
    gap: 12px;
    border: 0;
}
.play {
    display: flex;
    height: 45px;
    background: #383838;
    border-radius: 6px;
}
.play button {
    width: 41px;
    justify-content: center;
    border-right: 1px solid #303030;
}
.play button:first-child {
    width: 51px;
    padding-left: 3px;
}
.play button:last-child {
    width: 37px;
    border: 0;
}
.ti.small {
    width: 26px;
    height: 26px;
}
.dim {
    opacity: .5;
}
.select {
    position: relative;
}
.select select {
    appearance: none;
    width: 100%;
    height: 100%;
    background: #0f0f0f;
    border: 2px solid #353535;
    border-radius: 6px;
}
.select .chev {
    position: absolute;
    right: 19px;
    top: 0;
    bottom: 0;
    margin: auto 0;
    pointer-events: none;
}
.debug-select {
    width: 234px;
    height: 44px;
}
.debug-select select {
    padding: 0 36px 2px 9px;
}

/* docking layout */
.workspace {
    flex: 1;
    min-height: 0;
    display: flex;
    gap: 8px;
    padding: 6px 0 6px 6px;
}
.left {
    width: 439px;
    flex: none;
    display: flex;
    flex-direction: column;
}
.center {
    flex: 1;
    min-width: 0;
    display: flex;
    flex-direction: column;
}
.right {
    width: 522px;
    flex: none;
    display: flex;
    flex-direction: column;
}
.dock-tabs {
    display: flex;
    flex: none;
    gap: 3px;
    height: 38px;
}
.dock-tab {
    width: 240px;
    height: 37px;
    display: flex;
    align-items: center;
    gap: 9px;
    padding: 0 21px 3px 8px;
    border-radius: 6px 6px 0 0;
    white-space: nowrap;
}
.dock-tab.active {
    background: #242424;
}
.dock-tab .ic {
    width: 24px;
    height: 22px;
}
.dock-tab.focus {
    color: #fff;
    background: linear-gradient(90deg, #242424, #0070e0 50%, #242424) top / 100% 2px no-repeat #242424;
}
.grey {
    color: #8a8a8a;
}
.lower {
    margin-top: 8px;
}
.components {
    background: #242424;
}
.panel-bar {
    display: flex;
    align-items: center;
    padding: 0 11px 0 7px;
    height: 40px;
}
.components .panel-bar {
    height: 42px;
}
.components .panel-bar .search {
    margin-left: 16px;
}
.btn {
    background: #383838;
    color: #fff;
    border: 2px solid #2a2a2a;
    border-radius: 6px;
    justify-content: center;
    height: 33px;
}
.add {
    width: 109px;
    height: 36px;
    border-color: #151515;
    gap: 7px;
}
.add svg {
    width: 20px;
    height: 20px;
}
.search {
    flex: 1;
    min-width: 0;
    height: 34px;
    margin-left: 7px;
    display: flex;
    align-items: center;
    gap: 12px;
    padding: 0 6px 1px 5px;
    border: 2px solid #353535;
    border-radius: 17px;
    background: #0f0f0f;
}
.search svg {
    width: 24px;
    height: 24px;
}
.search input {
    flex: 1;
    min-width: 0;
    outline: 0;
}
input::placeholder {
    color: #575757;
    opacity: 1;
}
.gear {
    margin-left: 10px;
}
.gear svg {
    width: 26px;
    height: 26px;
}
.tree-wrap {
    display: flex;
    height: 260px;
    margin-top: 6px;
    padding: 6px 12px 0 6px;
    gap: 6px;
    background: #1a1a1a;
    border-radius: 6px;
}
.tree {
    flex: 1;
    min-width: 0;
}
.tree li {
    height: 36px;
    display: flex;
    align-items: center;
    overflow: hidden;
    white-space: nowrap;
    padding-left: 6px;
}
.tree li:nth-child(even) {
    background: #151515;
}
.tree .tri {
    width: 16px;
    height: 12px;
    margin-right: 4px;
}
.tree span {
    margin-left: 9px;
}
.tree .d1 {
    padding-left: 25px;
}
.tree .d2 {
    padding-left: 40px;
}
.tree .d3 {
    padding-left: 75px;
}
.tree .leaf {
    padding-left: 60px;
}
.tree a {
    margin-left: 12px;
    border-bottom: 1px dotted #c0c0c0;
}
.tree a.end {
    margin-left: auto;
    margin-right: 6px;
}
.scroll-thumb {
    width: 12px;
    height: 171px;
    margin-top: 3px;
    border-radius: 6px;
    background: #575757;
}
.my-blueprint {
    flex: 1;
    min-height: 0;
    background: #242424;
    display: flex;
    flex-direction: column;
}
.my-blueprint .panel-bar {
    height: 52px;
    padding-bottom: 4px;
}
.sections {
    flex: 1;
    border-top: 3px solid #1a1a1a;
    background: #1a1a1a;
}
.sec {
    height: 42px;
    margin: 0;
    display: flex;
    align-items: center;
    background: #2f2f2f;
    font-size: 16px;
    font-weight: 400;
    padding: 0 12px 0 9px;
}
.sec.tall {
    height: 48px;
}
.sec.short {
    height: 39px;
}
.sec.gap {
    margin-top: 3px;
}
.sec .tri {
    width: 17px;
    height: 12px;
    margin-right: 3px;
}
.sec.short .tri {
    height: 16px;
}
.sec button {
    margin-left: auto;
}
.sec button svg {
    width: 24px;
    height: 24px;
}
.item {
    height: 41px;
    display: flex;
    align-items: center;
    padding: 0 0 2px 6px;
}
.tri-r {
    width: 12px;
    height: 16px;
}
.item .ic {
    width: 22px;
    margin: 0 4px 0 12px;
}
.cat {
    height: 27px;
    display: flex;
    align-items: center;
    gap: 6px;
    font-size: 18px;
    padding-left: 6px;
}
.vars li {
    height: 39px;
    display: flex;
    align-items: center;
    padding: 0 5px 2px 29px;
}
.vars .name {
    flex: 1;
}
.pill {
    width: 18px;
    height: 10px;
    border-radius: 5px;
    background: currentColor;
    margin-right: 9px;
}
.vars .type {
    width: 112px;
    margin-right: 13px;
    overflow: hidden;
    white-space: nowrap;
}
.eye {
    width: 24px;
    height: 14px;
}
.pill.enum, .data.enum {
    color: #00756b;
}
.pill.float {
    color: #38d500;
}
.pill.object, .data.object {
    color: #00a8f6;
}
.pill.bool, .data.bool {
    color: #930000;
}
.data.object-d {
    color: #0086c8;
}
.data.float {
    color: #2a9c08;
}
.data.name {
    color: #c87eff;
}
.data.name-d {
    color: #9a62c4;
}
.data.vector {
    color: #c99a1e;
}

/* graph canvas */
.graph {
    flex: 1;
    min-height: 0;
    position: relative;
    overflow: hidden;
    background-color: #262626;
    background-image:
        linear-gradient(90deg, transparent 445px, #000 445px, #000 447px, transparent 447px),
        linear-gradient(90deg, #161616 2px, transparent 2px),
        linear-gradient(#161616 2px, transparent 2px),
        linear-gradient(90deg, #353535 2px, transparent 2px),
        linear-gradient(#353535 2px, transparent 2px);
    background-size: 100% 100%, 168px 168px, 168px 168px, 21px 21px, 21px 21px;
    background-position: 0 0, 109px 42px, 109px 42px, 4px 0, 4px 0;
}
.graph::after {
    content: "";
    position: absolute;
    inset: 0;
    box-shadow: inset 0 0 60px rgba(0, 0, 0, .5);
    pointer-events: none;
}
.comment {
    position: absolute;
    left: 48px;
    right: -40px;
    top: 106px;
    bottom: -40px;
    padding: 4px;
    background: rgba(26, 104, 104, .5);
}
.comment h2 {
    margin: 0;
    height: 49px;
    background: #00abab;
    border-top: 2px solid #12bcbc;
    color: #eee;
    font-size: 32px;
    font-weight: 400;
    line-height: 48px;
    padding-left: 14px;
    text-shadow: 2px 2px 1px #033;
}
.wires {
    position: absolute;
    left: 0;
    top: 0;
    width: 100%;
    height: 100%;
}
.node {
    position: absolute;
    border: 2px solid #0a0c0c;
    border-radius: 8px;
    background: linear-gradient(rgba(26, 32, 31, .93), rgba(12, 18, 17, .93) 50%);
    box-shadow: 0 4px 8px rgba(0, 0, 0, .5);
    color: #e4e4e4;
    font-size: 16px;
    line-height: 20px;
    white-space: nowrap;
}
.node header {
    height: 30px;
    display: flex;
    align-items: center;
    gap: 6px;
    padding: 0 0 2px 11px;
    border-radius: 6px 6px 0 0;
    box-shadow: inset 0 2px 2px rgba(255, 255, 255, .3);
}
.node header.tall {
    height: 53px;
    align-items: flex-start;
    padding: 6px 10px 0 12px;
}
.node strong {
    display: block;
    font-size: 18px;
    font-weight: 700;
    color: #bdbdbd;
}
.node em {
    display: block;
    margin-top: 3px;
    font-size: 17px;
    color: #a08a62;
}
.hi {
    width: 20px;
    height: 20px;
}
.hi.fn {
    width: 16px;
    margin: 0 2px;
    color: #8be08b;
}
.red {
    background: radial-gradient(ellipse at 40% 60%, rgba(60, 12, 12, .8), transparent 45%), linear-gradient(100deg, #a01818 20%, #7c2424 55%, #323636 95%);
}
.node .grey {
    background: radial-gradient(ellipse at 50% 60%, rgba(40, 40, 40, .8), transparent 40%), linear-gradient(90deg, #a0a0a0, #777 50%, #383c3c);
}
.steel {
    background: radial-gradient(ellipse at 42% 50%, rgba(28, 44, 60, .85), transparent 40%), linear-gradient(90deg, #5989ae, #456a86 50%, #2c3436 95%);
}
.green {
    background: radial-gradient(ellipse at 40% 55%, rgba(34, 48, 32, .85), transparent 50%), linear-gradient(90deg, #5f915f, #4c7048 50%, #2c3a34 95%);
}
.green em {
    color: #81915f;
}
.delegate {
    width: 13px;
    height: 14px;
    margin: 13px -2px 0 auto;
    border: 3px solid #ff3636;
    border-radius: 3px;
    background: #300;
}
.pins {
    display: flex;
    justify-content: space-between;
    padding: 3px 16px 0 17px;
}
.row {
    height: 42px;
    display: flex;
    align-items: center;
    gap: 6px;
}
.out .row {
    justify-content: flex-end;
}
.exec {
    width: 16px;
    height: 20px;
}
.data {
    width: 20px;
    height: 16px;
}
.round {
    border-radius: 17px;
    background: linear-gradient(rgba(130, 140, 140, .8), rgba(50, 62, 60, .8) 17px, rgba(28, 44, 42, .85) 18px, rgba(24, 38, 36, .85));
    box-shadow: inset 0 2px 1px rgba(255, 255, 255, .35), 0 4px 8px rgba(0, 0, 0, .5);
}
.var {
    height: 49px;
    display: flex;
    align-items: center;
    justify-content: flex-end;
    gap: 7px;
    padding-right: 18px;
}
.blue-glow {
    background: radial-gradient(ellipse 60% 70% at 50% 0, rgba(40, 150, 210, .85), transparent), linear-gradient(rgba(110, 120, 120, .8), rgba(50, 62, 60, .8) 17px, rgba(24, 42, 44, .85) 18px, rgba(24, 38, 36, .85));
}
.teal-glow {
    background: radial-gradient(ellipse 60% 70% at 50% 0, rgba(40, 160, 145, .7), transparent), linear-gradient(rgba(110, 120, 120, .8), rgba(50, 62, 60, .8) 17px, rgba(24, 42, 40, .85) 18px, rgba(24, 38, 36, .85));
}
.n-shoot {
    left: 70px;
    top: 211px;
    width: 221px;
    height: 104px;
}
.n-branch {
    left: 343px;
    top: 232px;
    width: 234px;
    height: 123px;
}
.n-set {
    left: 595px;
    top: 253px;
    width: 239px;
    height: 105px;
    background: radial-gradient(ellipse 45% 45px at 50% 0, rgba(150, 40, 40, .65), transparent), linear-gradient(rgba(120, 130, 130, .8), rgba(50, 62, 60, .8) 17px, rgba(28, 44, 42, .85) 18px, rgba(24, 38, 36, .85));
}
.n-set .pins {
    padding: 12px 17px 0 18px;
}
.n-set .mid {
    position: absolute;
    left: 0;
    right: 0;
    top: 9px;
    text-align: center;
    font-size: 17px;
    font-weight: 500;
}
.n-set2 {
    left: 1435px;
    top: 233px;
}
.node input[type=checkbox] {
    appearance: none;
    width: 22px;
    height: 22px;
    margin-left: 2px;
    border: 1px solid #2c2c2c;
    border-radius: 3px;
    background: #0f0f0f;
}
.n-mesh {
    left: 847px;
    top: 190px;
    width: 172px;
}
.n-montage {
    left: 868px;
    top: 233px;
    width: 434px;
    height: 332px;
}
.clock {
    position: absolute;
    right: -14px;
    top: -17px;
    width: 32px;
    height: 32px;
}
.row.asset {
    height: 68px;
}
.asset-pick {
    display: flex;
    align-items: center;
    gap: 5px;
    padding-left: 8px;
}
.asset-pick .select {
    width: 132px;
    height: 30px;
}
.asset-pick select {
    background: #262b2a;
    border: 0;
    font-size: 15px;
    padding: 0 26px 0 3px;
    color: #9a9a9a;
}
.asset-pick .select .chev {
    right: 9px;
}
.asset-pick button svg {
    width: 20px;
    height: 20px;
    color: #4a4f4e;
}
.row.val {
    height: 48px;
}
.val input {
    height: 26px;
    padding: 0 4px;
    border: 2px solid #b0b0b0;
    border-radius: 2px;
    color: #aaa;
    font-size: 18px;
}
.num {
    width: 38px;
}
.word {
    width: 65px;
}
.n-stance {
    left: 48px;
    top: 505px;
    width: 173px;
}
.n-equal {
    left: 238px;
    top: 484px;
    width: 445px;
    height: 101px;
    display: flex;
    justify-content: space-between;
    align-items: center;
    padding: 0 16px;
}
.n-equal .in {
    align-self: flex-start;
}
.n-equal .row-a {
    height: 38px;
}
.n-equal .row-b {
    height: 54px;
    gap: 14px;
}
.n-equal .select {
    width: 250px;
    height: 35px;
}
.n-equal select {
    font-size: 15px;
    border: 1px solid #353535;
    padding: 0 40px 0 11px;
}
.eq {
    position: absolute;
    left: 205px;
    top: 42px;
    display: flex;
    gap: 5px;
}
.eq i {
    width: 14px;
    height: 4px;
    background: #8e9896;
}
.marquee {
    position: absolute;
    left: 8px;
    top: 467px;
    width: 731px;
    height: 166px;
    border: 2px solid #f0505c;
    border-radius: 3px;
}
.n-mesh2 {
    left: 1245px;
    top: 620px;
    width: 174px;
}
.n-socket {
    left: 1497px;
    top: 568px;
    width: 260px;
    height: 149px;
}
.n-world {
    left: 1140px;
    top: 722px;
    width: 281px;
    height: 110px;
}
.graph-bar {
    position: relative;
    z-index: 1;
    height: 57px;
    display: flex;
    align-items: center;
    padding: 0 9px 0 12px;
    background: rgba(0, 0, 0, .6);
    color: #7c7c7c;
    font-size: 28px;
}
.graph-bar button {
    gap: 11px;
    color: #c0c0c0;
}
.bar-sep {
    width: 3px;
    height: 48px;
    margin: 0 14px 0 15px;
    background: #1c1c1c;
}
.nav-btn + .nav-btn {
    margin-left: 30px;
}
.nav-btn svg {
    width: 28px;
    height: 22px;
}
.crumb-ic {
    width: 32px;
    height: 30px;
    margin: 0 23px 0 4px;
    color: #c0c0c0;
}
.crumb-sep {
    width: 14px;
    height: 24px;
    margin: 0 14px;
}
.zoom {
    margin-left: auto;
    font-size: 32px;
    color: #333;
}
.watermark {
    position: absolute;
    z-index: 1;
    right: 17px;
    bottom: 15px;
    font-size: 94px;
    font-weight: 500;
    line-height: 108px;
    color: rgba(190, 205, 205, .25);
}

/* compiler results */
.results-tabs {
    margin-top: 7px;
}
.results-tabs .dock-tab {
    height: 38px;
}
.results {
    flex: none;
    height: 273px;
    background: #1a1a1a;
    display: flex;
    flex-direction: column;
    justify-content: space-between;
    padding: 28px 24px 24px 18px;
}
.results li {
    display: flex;
    align-items: center;
    gap: 18px;
    padding-left: 17px;
    font: 18px/24px "DejaVu Sans Mono", "Noto Sans CJK SC", monospace;
}
.results li::before {
    content: "";
    width: 6px;
    height: 6px;
    border-radius: 3px;
    background: #fff;
}
.results-foot {
    display: flex;
}
.pages {
    flex: 1;
    display: flex;
    justify-content: center;
}
.pages .btn {
    width: 104px;
    gap: 6px;
    padding-right: 6px;
    color: #777;
}
.clear {
    width: 93px;
}
.details {
    flex: 1;
    background: #242424;
}

/* status bar */
.status {
    flex: none;
    height: 39px;
    display: flex;
    gap: 3px;
    padding-left: 2px;
    overflow: hidden;
}
.s-item {
    height: 48px;
    background: #242424;
    display: flex;
    align-items: center;
    gap: 6px;
    padding: 0 15px;
    white-space: nowrap;
}
.s-cmd {
    padding: 0 13px 0 21px;
}
.s-cmd button {
    gap: 11px;
}
.s-cmd input {
    width: 450px;
    height: 34px;
    margin-left: 13px;
    padding: 0 10px;
    background: #0f0f0f;
    border: 2px solid #353535;
    border-radius: 6px;
    font-size: 18px;
}
.s-fill {
    flex: 1;
    background: #242424;
}
.s-saved {
    padding: 0 18px;
    gap: 7px;
}
.s-vcs {
    padding: 0 0 0 21px;
    margin-right: -3px;
    gap: 9px;
}
```
